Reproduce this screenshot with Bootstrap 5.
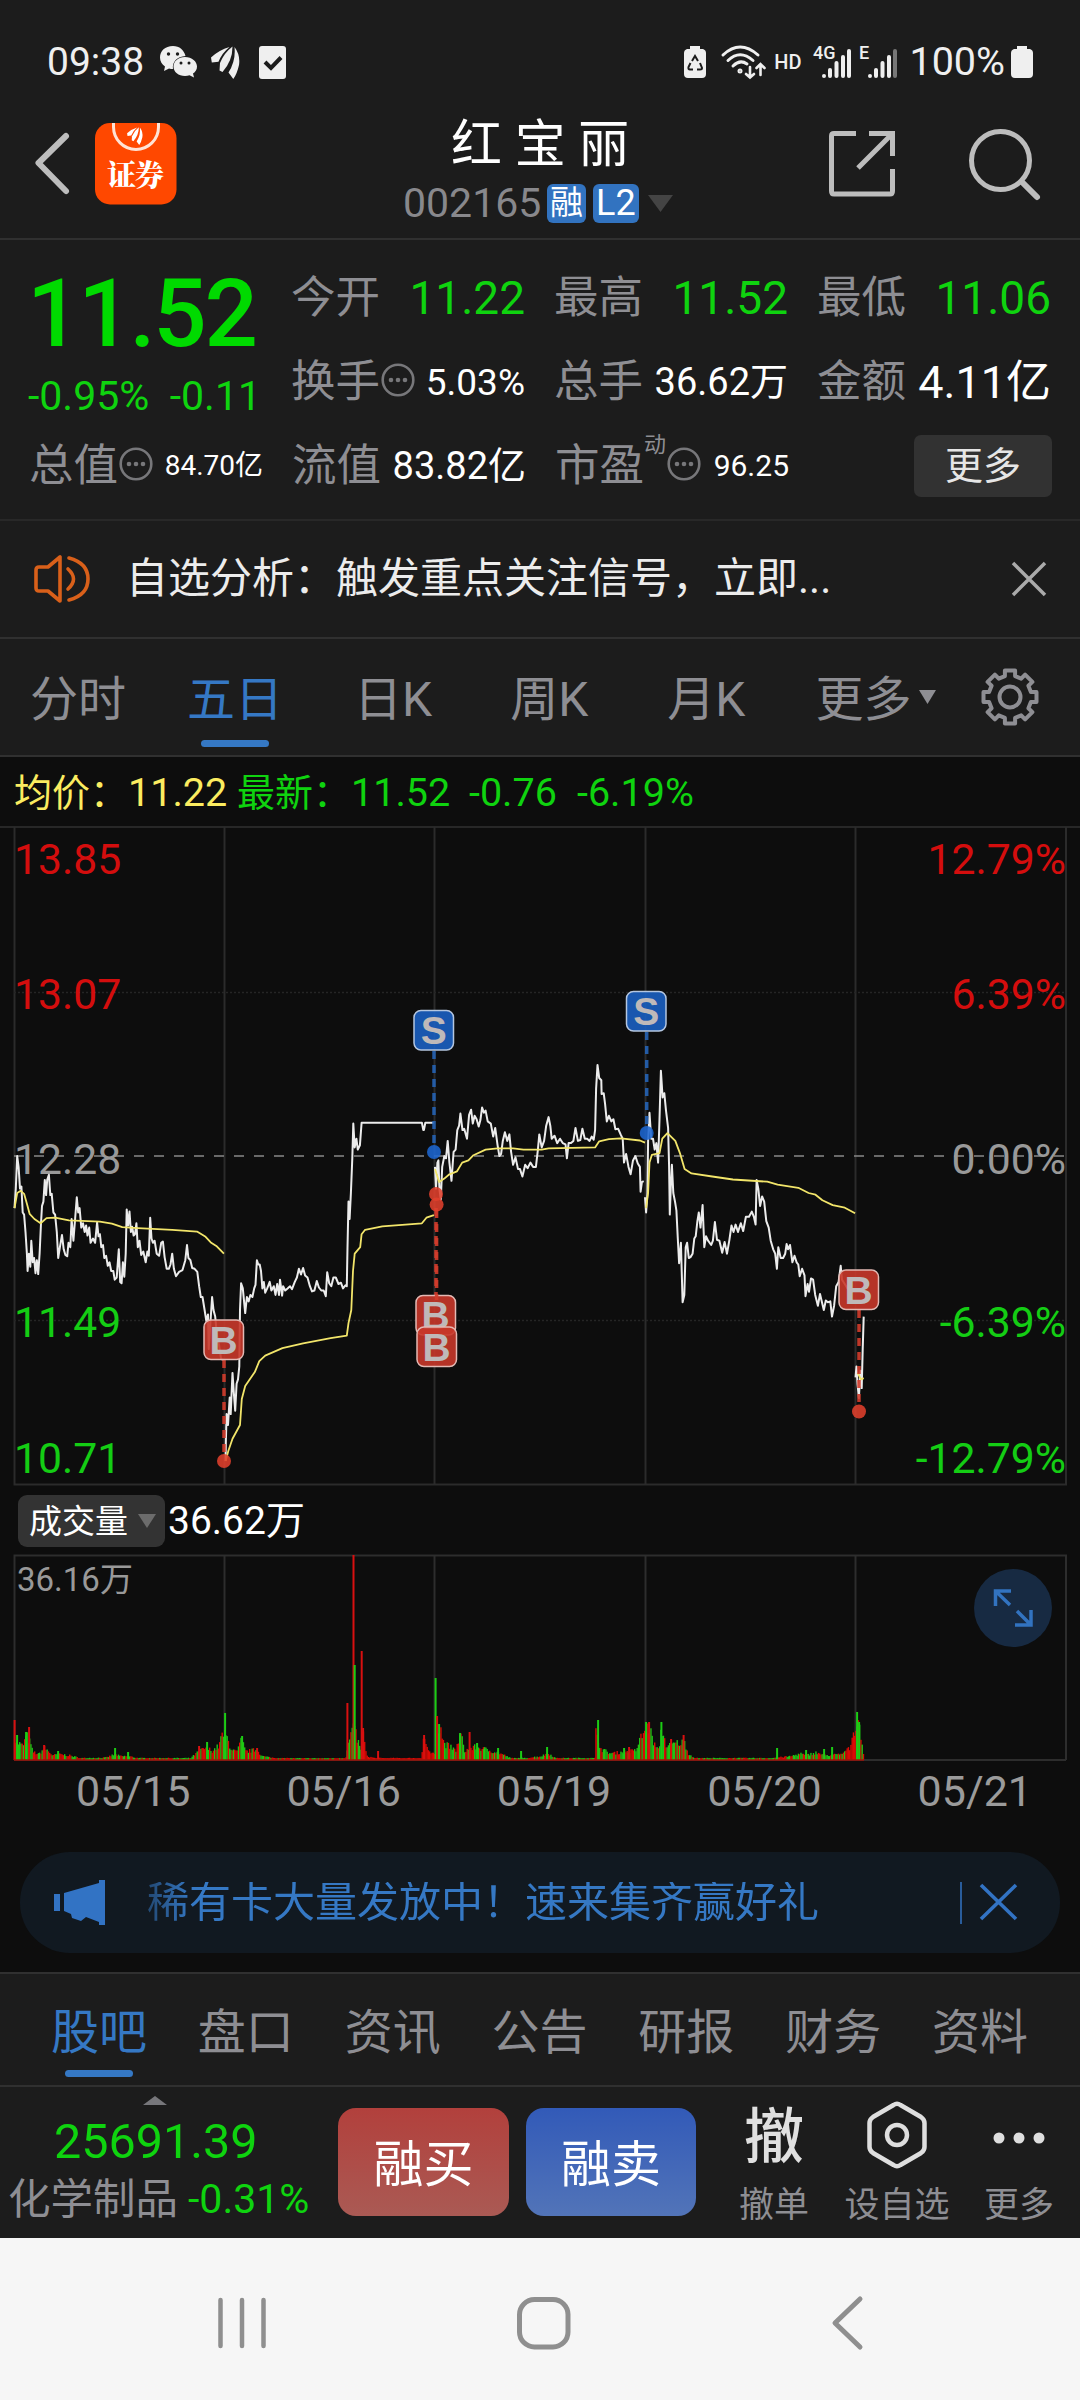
<!DOCTYPE html>
<html lang="zh-CN">
<head>
<meta charset="utf-8">
<meta name="viewport" content="width=device-width, initial-scale=1">
<title>红宝丽 002165</title>
<link rel="stylesheet" href="https://cdn.jsdelivr.net/npm/bootstrap@5.3.0/dist/css/bootstrap.min.css">
<style>
:root{--panel:#1c1c1c;--ink:#0d0d0d;--rule:#303030;--mute:#8e8e93;--up:#e00b0b;--down:#0fd30f;--accent:#3578c4}
body{width:1080px;height:2400px;overflow:hidden;background:var(--panel);color:#fff;font-family:Roboto,"Noto Sans CJK SC",sans-serif;font-size:40px;line-height:1}
svg{display:block;flex:none;overflow:visible}
.mute{color:var(--mute)}.down{color:var(--down)}.accent{color:var(--accent)}
.rule-b{border-bottom:2px solid var(--rule)}
.status{height:120px;padding:4px 47px 0 47px;color:#efefef;font-size:39px}
.topbar{height:120px}
.title{font-size:51px;height:64px;line-height:64px}
.code{font-size:41px;color:#88888c}
.tag{background:#3273c0;border-radius:6px;height:39px;line-height:38px;font-size:33px;padding:0 3px}
.quote{height:281px;padding:28px 28px 0 28px}
.big{font-size:94px;font-weight:500;color:#00da00;height:95px;line-height:93px;padding-left:1px;letter-spacing:-2.2px;margin-left:-2px}
.cell{height:84px;width:234px;margin-left:29px}
.cell .lb{font-size:44.5px;color:var(--mute)}
.f46{font-size:46px}.f45{font-size:45px}.f38{font-size:38px}.f37{font-size:37px}.f30{font-size:30px}.f28{font-size:28px}
.morebtn{width:138px;height:62px;background:#323232;color:#e6e6e6;font-size:38px;border-radius:7px}
.notice{height:118px;padding:0 34px;color:#ececec;font-size:42px}
.ktabs{height:118px;font-size:48px;color:var(--mute)}
.ktabs .tabx,.btabs .tabx{height:100%;position:relative;display:flex;align-items:center;padding-top:6px}
.tabx.on{color:var(--accent)}
.tabx.on::after{content:"";position:absolute;left:50%;margin-left:-34px;width:68px;height:7px;border-radius:4px;background:var(--accent);bottom:8px}
.dark{background:var(--ink)}
.info{height:69px;font-size:39.5px;padding:2px 0 0 14px}
.info b{font-weight:400;font-size:38px}
.chart text{font-family:Roboto,"Noto Sans CJK SC",sans-serif;font-size:42.7px}
.volhead{height:70px;padding:0 0 0 18px;font-size:39px}
.volbtn{width:147px;height:52px;background:#333;border-radius:9px;font-size:33px;padding:0 9px 0 11px}
.dates{height:52px;padding-left:28px;margin-top:4px;font-size:43px;color:#9b9b9b}
.banner{height:101px;margin:35px 20px 19px;border-radius:50px;background:#111921;color:var(--accent);font-size:42px;padding:0 43px 0 34px}
.fade-in-text{-webkit-mask-image:linear-gradient(90deg,rgba(0,0,0,.5),#000 45px);mask-image:linear-gradient(90deg,rgba(0,0,0,.5),#000 45px)}
.btabs{height:115px;border-top:2px solid var(--rule);font-size:48px;color:var(--mute);padding:0 52px 0 51px}
.trade{height:151px}
.tbtn{height:108px;border-radius:18px;font-size:50px;margin-top:21px;color:#fff;padding-top:5px}
.buy{width:171px;background:linear-gradient(#b2403c,#aa5a54)}
.sell{width:170px;background:linear-gradient(#325ab8,#5274b8)}
.act{font-size:35px;color:var(--mute)}
.act .pic{height:76px}
.sysnav{height:164px;background:#f6f6f6}
</style>
</head>
<body>
<svg width="0" height="0" class="position-absolute"><defs>
<symbol id="wing" viewBox="0 0 29 33"><path d="M18.500 1Q8 4 0 11.500L.8 16.500L7.500 15.800Q11 7 18.500 1Z"/><path d="M21.500 .5Q13 7 9 17L8.500 24.500L11.500 26Q21.500 15 21.500 .5Z"/><path d="M23.500 1Q29.500 9 28 19Q26 28 22.300 33L17.500 26.500Q25 15 23.500 1Z"/></symbol>
<symbol id="dots" viewBox="0 0 34 34"><circle cx="17" cy="17" r="15.3" fill="none" stroke="#77777a" stroke-width="2.6"/><g fill="#77777a"><circle cx="10" cy="17" r="2.3"/><circle cx="17" cy="17" r="2.3"/><circle cx="24" cy="17" r="2.3"/></g></symbol>
</defs></svg>

<header>
<div class="status d-flex align-items-center">
  <span>09:38</span>
  <svg class="ms-3" width="37" height="32" viewBox="0 0 37 32" fill="#efefef"><path d="M13 0C5 0 0 5 0 11.5C0 15.500 2 18.500 5 20.500L4 25L9 22.500Q11 23 13 23C12 16 17 10.500 25.500 10C24 4 19.500 0 13 0Z"/><path d="M25 11C18 11 13.500 15.500 13.500 20.500C13.500 26 18.500 30 25 30Q27.500 30 29.500 29.200L34 31.500L33 27.500C35.500 26 37 23.500 37 20.500C37 15.500 32 11 25 11Z"/><g fill="#1c1c1c"><circle cx="8.500" cy="8" r="1.700"/><circle cx="17.500" cy="8" r="1.700"/><circle cx="21" cy="17" r="1.500"/><circle cx="29" cy="17" r="1.500"/></g></svg>
  <svg width="29" height="33" fill="#efefef" style="margin-left:14px"><use href="#wing"/></svg>
  <svg width="27" height="33" style="margin-left:19px"><rect width="27" height="33" rx="3" fill="#efefef"/><path d="M6 16L12 22L22 11.500" fill="none" stroke="#1c1c1c" stroke-width="4"/></svg>
  <svg class="ms-auto" width="22" height="32" fill="#efefef"><path d="M6 0H16V3H19Q22 4 22 7V28Q22 32 18 32H4Q0 32 0 28V7Q0 4 3 3H6Z"/><path d="M8 15L11 10L14 15M16 17L18 22Q18 23.500 16 23.500H13M9 23.500H6Q4 23.500 4.500 21L6.500 17" fill="none" stroke="#1c1c1c" stroke-width="2"/></svg>
  <svg width="45" height="34" fill="none" stroke="#efefef" stroke-width="3" stroke-linecap="round" style="margin-left:15px"><path d="M2 10Q19 -6 37 10M7 15.500Q19 4 32 15.500M12 21Q19 14 26 19"/><circle cx="19" cy="26" r="1" /><path d="M29 22V32M25 29L29 32.500L33 29M39.500 30V20M35.500 23L39.500 19L43.500 23" stroke-width="2.600"/></svg>
  <span style="font-size:20px;font-weight:500;margin-left:8px">HD</span>
  <svg class="chart" width="40" height="36" style="margin-left:12px" fill="#efefef"><text x="0" y="15" style="font-size:18px;font-weight:500">4G</text><rect x="9" y="30" width="4" height="4" rx="2"/><rect x="15" y="24" width="4" height="10" rx="2"/><rect x="21.500" y="17" width="4" height="17" rx="2"/><rect x="28" y="11" width="4" height="23" rx="2"/><rect x="34" y="5" width="4" height="29" rx="2"/></svg>
  <svg class="chart" width="40" height="36" style="margin-left:6px" fill="#efefef"><text x="0" y="15" style="font-size:18px;font-weight:500">E</text><rect x="9" y="30" width="4" height="4" rx="2"/><rect x="15" y="24" width="4" height="10" rx="2"/><rect x="21.500" y="17" width="4" height="17" rx="2"/><rect x="28" y="11" width="4" height="23" rx="2"/><rect x="34" y="5" width="4" height="29" rx="2" fill="#777"/></svg>
  <span style="margin-left:10px;font-size:39.500px">100%</span>
  <svg width="22" height="32" fill="#efefef" style="margin-left:6px"><path d="M6 0H16V3H19Q22 4 22 7V28Q22 32 18 32H4Q0 32 0 28V7Q0 4 3 3H6Z"/></svg>
</div>
<div class="topbar rule-b d-flex">
  <svg width="403" height="118" viewBox="0 120 403 118"><path d="M66 136L38.500 163L66 191" fill="none" stroke="#bdbdbd" stroke-width="6" stroke-linecap="round" stroke-linejoin="round"/><rect x="95" y="123" width="81.500" height="81.500" rx="15" fill="#ff4800"/><path d="M113.500 123V127A22.500 22.500 0 0 0 158.500 127V123" fill="none" stroke="#ffe3d5" stroke-width="3"/><svg x="126" y="127" width="18" height="18" fill="#fff"><use href="#wing"/></svg><text x="107" y="186" fill="#fff" font-size="29" font-weight="900" style="font-family:'Noto Serif CJK SC','Noto Sans CJK SC',sans-serif" textLength="57">证券</text></svg>
  <div class="d-flex flex-column" style="width:270px">
    <div class="title" style="padding-left:48px;margin-top:-7px">红 宝 丽</div>
    <div class="d-flex align-items-center code" style="margin-top:6px"><span style="width:144px">002165</span><span class="tag text-white">融</span><span class="tag text-white" style="margin-left:7px;font-size:36px">L2</span><svg class="ms-auto" width="25" height="17"><path d="M0 0H25L12.500 17Z" fill="#444"/></svg></div>
  </div>
  <svg width="406" height="118" viewBox="673 120 406 118" fill="none" stroke="#bdbdbd" stroke-width="5"><path d="M856 133.500H834Q831.500 133.500 831.500 136V191Q831.500 194 834 194H890Q892.500 194 892.500 191V169M869 133.500H892.500V156M892.500 133.500L858 168"/><circle cx="1000.500" cy="160.500" r="29"/><path d="M1022 182L1037 197" stroke-width="6" stroke-linecap="round"/></svg>
</div>
</header>

<section class="quote rule-b" style="border-color:#282828">
  <div class="d-flex" style="height:156px">
    <div style="width:234px">
      <div class="big">11.52</div>
      <div class="d-flex justify-content-between down" style="margin-top:3px;font-size:41px;padding-right:1px;height:61px;line-height:61px"><span>-0.95%</span><span>-0.11</span></div>
    </div>
    <div class="d-flex flex-wrap align-content-start" style="width:790px;margin-top:-12px">
      <div class="cell d-flex justify-content-between align-items-center"><span class="lb">今开</span><span class="down f46">11.22</span></div>
      <div class="cell d-flex justify-content-between align-items-center"><span class="lb">最高</span><span class="down f46">11.52</span></div>
      <div class="cell d-flex justify-content-between align-items-center"><span class="lb">最低</span><span class="down f46">11.06</span></div>
      <div class="cell d-flex align-items-center"><span class="lb">换手</span><svg width="34" height="34" style="margin:-4px 0 0 1px"><use href="#dots"/></svg><span class="f37 ms-auto">5.03%</span></div>
      <div class="cell d-flex justify-content-between align-items-center"><span class="lb">总手</span><span class="f38">36.62万</span></div>
      <div class="cell d-flex justify-content-between align-items-center"><span class="lb">金额</span><span class="f45">4.11亿</span></div>
    </div>
  </div>
  <div class="d-flex" style="margin-left:-28px">
    <div class="cell d-flex align-items-center"><span class="lb">总值</span><svg width="34" height="34" style="margin:-4px 0 0 1px"><use href="#dots"/></svg><span class="f28 ms-auto">84.70亿</span></div>
    <div class="cell d-flex justify-content-between align-items-center"><span class="lb">流值</span><span class="f38">83.82亿</span></div>
    <div class="cell d-flex align-items-center"><span class="lb">市盈</span><span class="mute align-self-start" style="font-size:22px;margin-top:10px">动</span><svg width="34" height="34" style="margin:-4px 0 0 1px"><use href="#dots"/></svg><span class="f30 ms-auto">96.25</span></div>
    <div class="cell d-flex justify-content-end align-items-center"><span class="morebtn d-flex justify-content-center align-items-center">更多</span></div>
  </div>
</section>

<section class="notice rule-b d-flex align-items-center">
  <svg width="57" height="48" fill="none" stroke="#d9601a" stroke-width="3.600" stroke-linejoin="round" stroke-linecap="round"><path d="M26 2V46L14 36H5Q2 36 2 33V15Q2 12 5 12H14ZM34 14Q45 24 34 34M35 3Q54 8 54 24Q54 40 35 45"/></svg>
  <span style="margin-left:35px">自选分析：触发重点关注信号，立即...</span>
  <svg class="ms-auto" width="34" height="34" stroke="#aaa" stroke-width="3.500"><path d="M1 1L33 33M33 1L1 33"/></svg>
</section>

<nav class="ktabs rule-b d-flex" style="padding-left:30px">
  <div class="tabx">分时</div>
  <div class="tabx on" style="margin-left:61px">五日</div>
  <div class="tabx" style="margin-left:71px">日K</div>
  <div class="tabx" style="margin-left:78px">周K</div>
  <div class="tabx" style="margin-left:79px">月K</div>
  <div class="tabx" style="margin-left:70px">更多<svg width="17" height="14" style="margin:-6px 0 0 8px"><path d="M0 0H17L8.500 14Z" fill="#8e8e93"/></svg></div>
  <svg class="align-self-center" width="58" height="58" viewBox="-29 -29 58 58" style="margin-left:45px" fill="none" stroke="#8e8e93" stroke-width="4" stroke-linejoin="round"><circle r="10.500"/><path id="gear" d=""/></svg>
</nav>

<main class="dark">
<div class="info d-flex align-items-center"><span style="color:#fbec60;width:223px"><b>均价：</b>11.22</span><span class="down" style="width:232px"><b>最新：</b>11.52</span><span class="down" style="width:108px">-0.76</span><span class="down">-6.19%</span></div>

<svg class="chart" width="1080" height="660" viewBox="0 826 1080 660">
  <g stroke="#303030" stroke-width="1.500" fill="none"><path d="M0 827H1080"/><path d="M14.500 827V1484.500H1066V827M224.500 827V1484M434.500 827V1484M645.500 827V1484M855.500 827V1484" stroke="#2b2b2b" stroke-width="2"/><path d="M14 992.500H1066M14 1320.500H1066" stroke-dasharray="2 2" stroke="#252525"/></g>
  <path d="M14 1156H1066" stroke="#888" stroke-width="1.500" stroke-dasharray="10 10"/>
  <g fill="#d40d0d"><text x="14" y="874">13.85</text><text x="14" y="1009">13.07</text><text x="1066" y="874" text-anchor="end">12.79%</text><text x="1066" y="1009" text-anchor="end">6.39%</text></g>
  <g fill="#999"><text x="14" y="1173.500">12.28</text><text x="1066" y="1173.500" text-anchor="end">0.00%</text></g>
  <g fill="#14cd14"><text x="14" y="1337">11.49</text><text x="14" y="1472.500">10.71</text><text x="1066" y="1337" text-anchor="end">-6.39%</text><text x="1066" y="1472.500" text-anchor="end">-12.79%</text></g>
  <g id="lines" fill="none" stroke-linejoin="round"></g>
  <g id="marks"></g>
</svg>

<div class="volhead d-flex align-items-center"><span class="volbtn d-flex align-items-center justify-content-between">成交量<svg width="18" height="14"><path d="M0 0H18L9 14Z" fill="#6c6c6c"/></svg></span><span style="margin-left:3px">36.62万</span></div>

<svg class="chart" width="1080" height="206" viewBox="0 1555 1080 206" style="margin-top:-1px">
  <path d="M14.500 1760V1555.500H1066V1760M224.500 1555V1760M434.500 1555V1760M645.500 1555V1760M855.500 1555V1760M14 1760H1066" fill="none" stroke="#2d2d2d" stroke-width="2"/>
  <text x="17" y="1591" fill="#999" style="font-size:33px">36.16万</text>
  <g id="vol"></g>
  <circle cx="1013" cy="1608" r="39" fill="#172a42"/><path d="M995.500 1606V1591H1011M996 1591.500L1010 1605M1031 1610V1625H1015M1030.500 1624.500L1017 1611" fill="none" stroke="#3273c0" stroke-width="3.500"/>
</svg>
<div class="dates d-flex text-center align-items-center"><span class="flex-fill">05/15</span><span class="flex-fill">05/16</span><span class="flex-fill">05/19</span><span class="flex-fill">05/20</span><span class="flex-fill">05/21</span></div>

<div style="height:155px;padding-top:.1px">
<div class="banner d-flex align-items-center">
  <svg width="51" height="45" fill="#3273c4"><path d="M0 14H6V31H0ZM10 13L45 3V0H51V45H45V42L32 37L27 41L18 38L17 34L10 31Z"/></svg>
  <span class="fade-in-text" style="margin-left:42px">稀有卡大量发放中！速来集齐赢好礼</span>
  <svg class="ms-auto" width="57" height="42" fill="none" stroke="#3273c4"><path d="M1 0V42" stroke-width="1.500"/><path d="M21 3L56 37M56 3L21 37" stroke-width="3.600"/></svg>
</div>
</div>
</main>

<nav class="btabs rule-b d-flex justify-content-between"><div class="tabx on">股吧</div><div class="tabx">盘口</div><div class="tabx">资讯</div><div class="tabx">公告</div><div class="tabx">研报</div><div class="tabx">财务</div><div class="tabx">资料</div></nav>

<section class="trade d-flex">
  <div class="d-flex flex-column" style="width:338px">
    <svg width="24" height="9" style="margin:9px 0 0 143px"><path d="M0 9L12 0L24 9Z" fill="#77777b"/></svg>
    <div class="down" style="font-size:48.500px;padding-left:54px;margin-top:13px">25691.39</div>
    <div class="d-flex align-items-center" style="margin-top:12px;padding-left:8px;font-size:42.500px"><span class="mute">化学制品</span><span class="down" style="font-size:41px;margin-left:10px">-0.31%</span></div>
  </div>
  <div class="tbtn buy d-flex align-items-center justify-content-center">融买</div>
  <div class="tbtn sell d-flex align-items-center justify-content-center" style="margin-left:17px">融卖</div>
  <div class="d-flex text-center act" style="margin:13px 0 0 38px">
    <div style="width:80px"><div class="pic d-flex align-items-center justify-content-center" style="font-size:60px;color:#e0e0e0;font-weight:500">撤</div><div style="margin-top:12px">撤单</div></div>
    <div style="width:110px;margin-left:28px"><div class="pic d-flex align-items-center justify-content-center"><svg width="60" height="68" style="margin-top:-6px" fill="none" stroke="#dedede" stroke-width="4.500"><path d="M26.500 4Q30 1.500 33.500 4L54 16Q57.500 18.500 57.500 22V46Q57.500 49.500 54 52L33.500 64Q30 66.500 26.500 64L6 52Q2.500 49.500 2.500 46V22Q2.500 18.500 6 16Z"/><circle cx="30" cy="34" r="10"/></svg></div><div style="margin-top:12px">设自选</div></div>
    <div style="width:80px;margin-left:27px"><div class="pic d-flex align-items-center justify-content-center"><svg width="52" height="12" fill="#dedede"><circle cx="6" cy="6" r="5.500"/><circle cx="26" cy="6" r="5.500"/><circle cx="46" cy="6" r="5.500"/></svg></div><div style="margin-top:12px">更多</div></div>
  </div>
</section>

<footer class="sysnav"><svg width="1080" height="162" viewBox="0 2238 1080 162" fill="none" stroke="#8f8f8f" stroke-width="5" stroke-linecap="round" stroke-linejoin="round"><path d="M220.500 2300V2346M242 2300V2346M263.500 2300V2346" stroke-width="4.500"/><rect x="519.500" y="2299.500" width="48.500" height="47.500" rx="15"/><path d="M860 2299L835 2323L860 2347"/></svg></footer>

<script src="https://cdn.jsdelivr.net/npm/bootstrap@5.3.0/dist/js/bootstrap.bundle.min.js"></script>
<script>
// Price and average series, one string per trading day, in plot units
const price=[
"42,895 46,850 50,775 54,800 58,850 62,845 66,905 70,910 74,950 78,1000 80,1040 84,1000 88,1030 91,970 95,1020 99,1010 103,1045 107,1015 111,1047 115,1000 119,930 122,890 126,880 130,830 134,865 137,830 142,818 146,865 150,862 155,905 160,910 165,950 169,1010 174,985 180,957 185,990 190,1003 195,1006 199,975 204,985 208,920 213,970 218,920 223,870 227,905 231,895 236,940 241,930 246,950 250,935 254,958 259,940 263,975 270,965 276,975 282,928 286,960 290,955 294,985 299,980 303,1010 308,1005 313,1028 318,1020 323,1040 329,1040 333,1060 339,1055 345,990 349,1065 353,1068 357,1020 361,1053 365,1000 368,898 372,935 376,903 380,950 384,938 388,958 392,955 396,930 400,985 405,970 410,1003 416,995 423,1020 428,995 432,1005 436,917 440,965 444,975 449,970 455,1000 462,1005 468,975 473,972 478,1008 484,1035 490,1035 495,1025 500,1000 505,1035 511,1052 520,1042 530,1038 538,1015 543,980 547,1010 553,1015 558,1033 565,1035 573,1042 578,1075 583,1100 588,1100 594,1130 599,1155 604,1140 606,1220 610,1170 616,1100 620,1130 625,1145 630,1190 636,1210 642,1243 650,1245",
"655,1478 656,1430 658,1370 662,1395 667,1332 670,1370 675,1275 679,1320 683,1362 687,1300 691,1290 695,1260 697,1130 700,1068 705,1080 712,1137 717,1100 722,1110 727,1095 733,1100 738,1080 742,1072 746,1015 750,1025 754,1025 758,1040 762,1080 766,1065 770,1090 776,1080 783,1065 788,1085 795,1075 800,1095 805,1070 810,1095 813,1060 819,1097 822,1075 828,1085 835,1080 842,1075 848,1082 856,1065 862,1055 868,1035 874,1048 880,1033 886,1050 893,1055 900,1075 906,1087 913,1085 920,1063 926,1078 933,1085 940,1085 946,1098 950,1043 956,1068 962,1075 968,1055 975,1055 983,1070 990,1067 996,1080 1003,1073 1007,1075 1009,985 1012,880 1015,920 1019,860 1023,780 1026,700 1030,755 1035,735 1039,760 1045,750 1050,698 1225,698 1229,715 1231,715 1235,698 1260,698",
"1263,800 1266,850 1270,790 1273,785 1276,850 1280,875 1284,800 1290,775 1295,780 1300,740 1305,790 1311,832 1317,765 1323,760 1328,715 1333,705 1337,677 1343,715 1348,712 1356,735 1362,680 1368,668 1373,700 1378,682 1384,690 1390,707 1395,692 1400,663 1405,675 1410,670 1416,695 1425,700 1432,730 1438,710 1445,750 1450,775 1455,770 1460,740 1466,720 1473,740 1479,725 1484,765 1490,795 1497,778 1504,805 1510,805 1517,822 1525,795 1532,803 1540,790 1548,800 1556,800 1562,760 1566,725 1573,755 1580,740 1586,705 1593,685 1598,705 1602,735 1610,728 1618,745 1626,735 1634,745 1642,748 1646,780 1651,745 1658,745 1665,740 1671,710 1678,740 1685,738 1691,712 1698,735 1705,735 1712,740 1718,730 1724,737 1728,715 1731,620 1735,565 1740,595 1746,600 1747,632 1753,630 1757,655 1762,695 1768,682 1775,695 1781,690 1787,713 1795,712 1802,725 1808,735 1812,790 1818,770 1825,800 1831,817 1838,785 1845,775 1852,792 1858,800 1860,857 1864,835 1869,833",
"1873,870 1876,905 1880,860 1882,740 1886,675 1891,735 1896,735 1901,760 1906,745 1911,790 1915,690 1919,578 1924,640 1929,630 1934,670 1940,710 1943,800 1945,910 1948,840 1951,795 1955,860 1960,880 1964,900 1968,965 1972,1022 1977,975 1982,1112 1987,1095 1991,985 1995,975 2000,1010 2005,1008 2011,1000 2016,965 2020,960 2025,925 2029,905 2034,940 2040,888 2045,985 2050,960 2056,970 2065,980 2070,970 2076,927 2082,968 2089,970 2097,998 2104,973 2111,1000 2118,968 2124,935 2130,950 2136,933 2143,950 2151,930 2158,948 2166,915 2175,915 2183,903 2189,915 2194,933 2197,830 2202,850 2207,890 2213,868 2219,880 2225,925 2232,940 2238,970 2245,990 2251,1000 2256,1035 2260,985 2267,1010 2274,1010 2280,1000 2284,978 2288,990 2294,980 2301,1020 2307,1005 2313,1020 2318,1025 2322,1052 2329,1035 2336,1050 2339,1098 2345,1070 2349,1088 2355,1057 2361,1060 2367,1095 2375,1120 2381,1093 2392,1130 2398,1108 2404,1112 2411,1110 2416,1145 2422,1120 2428,1075 2435,1065 2441,1028 2445,1060 2453,1070 2461,1080 2468,1088 2476,1088",
"2484,1285 2487,1260 2490,1300 2494,1333 2498,1270 2502,1310 2505,1220 2508,1145"];
const avg=[
"42,895 50,860 60,855 70,862 78,885 86,908 100,920 118,930 135,918 160,917 200,923 290,926 325,931 355,939 400,941 500,945 572,949 597,961 612,974 628,982 650,1000",
"655,1478 663,1455 675,1427 697,1395 702,1335 712,1305 740,1273 753,1248 770,1235 820,1218 880,1207 960,1195 1007,1189 1012,1160 1020,1130 1025,1040 1030,1000 1046,985 1050,955 1060,945 1110,937 1225,930 1238,917 1260,911",
"1263,805 1275,835 1290,827 1305,817 1327,810 1342,790 1360,785 1375,773 1410,760 1445,757 1490,757 1520,760 1573,760 1593,757 1728,755 1740,741 1768,736 1803,734 1858,739 1873,744",
"1876,895 1882,860 1886,790 1893,772 1915,768 1923,735 1938,722 1961,740 1975,770 1988,805 2008,815 2068,822 2128,829 2228,834 2258,841 2318,848 2348,860 2368,864 2388,877 2418,888 2453,894 2483,907",
"2490,1275 2500,1290 2508,1287"];
const pts=s=>s.split(" ").map(p=>{const[a,b]=p.split(",");return (a/2.9037).toFixed(1)+","+(820+b/2.3059).toFixed(1)}).join(" ");
lines.innerHTML=price.map(s=>`<polyline points="${pts(s)}" stroke="#ececec" stroke-width="2"/>`).join("")+avg.map(s=>`<polyline points="${pts(s)}" stroke="#f2e56a" stroke-width="1.8"/>`).join("");

// Trade markers: letter, box left/top, stem x, stem from/to, dot y
const red="#c8372a",blue="#1b5fc1";
const mk=(t,x,y,sx,y1,y2,dy)=>{const c=t=="B"?red:blue;return `<path d="M${sx} ${y1}V${y2}" stroke="${t=="B"?"#d23c2c":"#2563b4"}" stroke-width="3.500" stroke-dasharray="8 6" opacity=".9"/><circle cx="${sx}" cy="${dy}" r="7" fill="${t=="B"?"#e0402c":"#1c66d2"}" opacity=".88"/><rect x="${x}" y="${y}" width="39.500" height="39.500" rx="7" fill="${c}" fill-opacity=".9" stroke="#e3b9b4" stroke-width="1.500" ${t=="S"?'style="stroke:#b4c6e0"':""}/><text x="${x+19.7}" y="${y+33.5}" text-anchor="middle" fill="#bfb9b9" style="font:700 39px 'Liberation Sans',sans-serif">${t}</text>`};
marks.innerHTML=mk("S",414,1010.5,434,1051,1146,1152)+mk("B",204,1320,224,1360,1456,1461)+mk("B",416,1295.5,436,1208,1296,1194)+mk("B",417,1327,436.6,1210,1300,1204.6)+mk("S",626.5,991.5,646.7,1032,1128,1133)+mk("B",839,1270,859,1310,1406,1411.5);

// Volume: base profile plus single-minute peaks
const env=[[14,22],[18,18],[22,15],[26,26],[30,17],[32,9],[38,6],[44,13],[48,9],[52,5],[60,6],[68,5],[80,2],[105,2.5],[114,6],[120,4],[128,4],[138,2],[190,2],[198,9],[205,13],[212,10],[218,15],[222,28],[226,25],[230,13],[236,8],[241,22],[245,9],[256,11],[262,4],[275,2],[345,1.5],[348,18],[352,35],[356,25],[360,10],[362,32],[366,4],[375,2],[421,2],[423,26],[428,8],[434,6],[436,40],[440,34],[443,18],[448,15],[455,10],[460,28],[464,10],[475,14],[490,10],[500,7],[510,2],[525,2],[540,4],[548,7],[555,2],[594,2],[595.5,34],[600,12],[610,7],[625,9],[635,10],[641,26],[648,36],[654,16],[658,10],[661,34],[666,14],[675,18],[684,19],[688,6],[695,2],[770,2],[790,4],[800,7],[805,5],[815,8],[825,5],[840,6],[850,13],[856,40],[860,30],[862,13],[864,1]];
const peaks=[[14.5,40,1],[17,25,0],[26,28,0],[29,33,1],[44,15,1],[58,9,0],[115,12,0],[128,8,0],[199,14,1],[207,18,0],[225,47,0],[242,24,0],[257,12,1],[347.3,57,1],[353.4,205,1],[354.6,95,0],[361.6,109,1],[363,32,1],[378,9,1],[424,25,1],[435.5,82,0],[437,44,1],[439,36,0],[460,27,0],[469.5,28,1],[477,17,0],[484,11,0],[498,12,0],[521,9,0],[547,13,0],[598,40,0],[624,12,0],[629,13,1],[646,38,0],[649,38,1],[661.3,38,0],[671,21,1],[683.5,25,1],[777,12,0],[806,10,0],[824,11,0],[832,13,0],[857,48,0],[859,38,0]];
let seed=7;const rnd=()=>(seed=(seed*16807)%2147483647)/2147483647;
let v="";
for(let x=14,i=0;x<864;x+=1.25){while(env[i+1][0]<=x)i++;const[a,p]=env[i],[b,q]=env[i+1];let h=(p+(q-p)*(x-a)/(b-a));h=Math.max(1.8,h*(.7+rnd()*.45));
 const solid=(x>362&&x<435)||(x>846&&x<855);v+=`<rect x="${x.toFixed(2)}" y="${(1760-h).toFixed(1)}" width="1.4" height="${h.toFixed(1)}" fill="${solid||rnd()<.46?"#dc0a05":"#1fc414"}"/>`}
peaks.forEach(([x,h,r])=>v+=`<rect x="${x-.9}" y="${1760-h}" width="2" height="${h}" fill="${r?"#d81010":"#1ccc14"}"/>`);
vol.innerHTML=v+'<path d="M14 1760H864" stroke="#a01208" stroke-width="1.5"/>';

// Eight-lobed gear outline
let g="";for(let k=0;k<8;k++){const t=k*Math.PI/4-Math.PI/2;[[-.24,21.5],[-.19,27],[.19,27],[.24,21.5]].forEach(([d,r])=>{g+=(g?"L":"M")+(Math.cos(t+d)*r).toFixed(1)+" "+(Math.sin(t+d)*r).toFixed(1)})}
gear.setAttribute("d",g+"Z");
</script>
</body>
</html>
